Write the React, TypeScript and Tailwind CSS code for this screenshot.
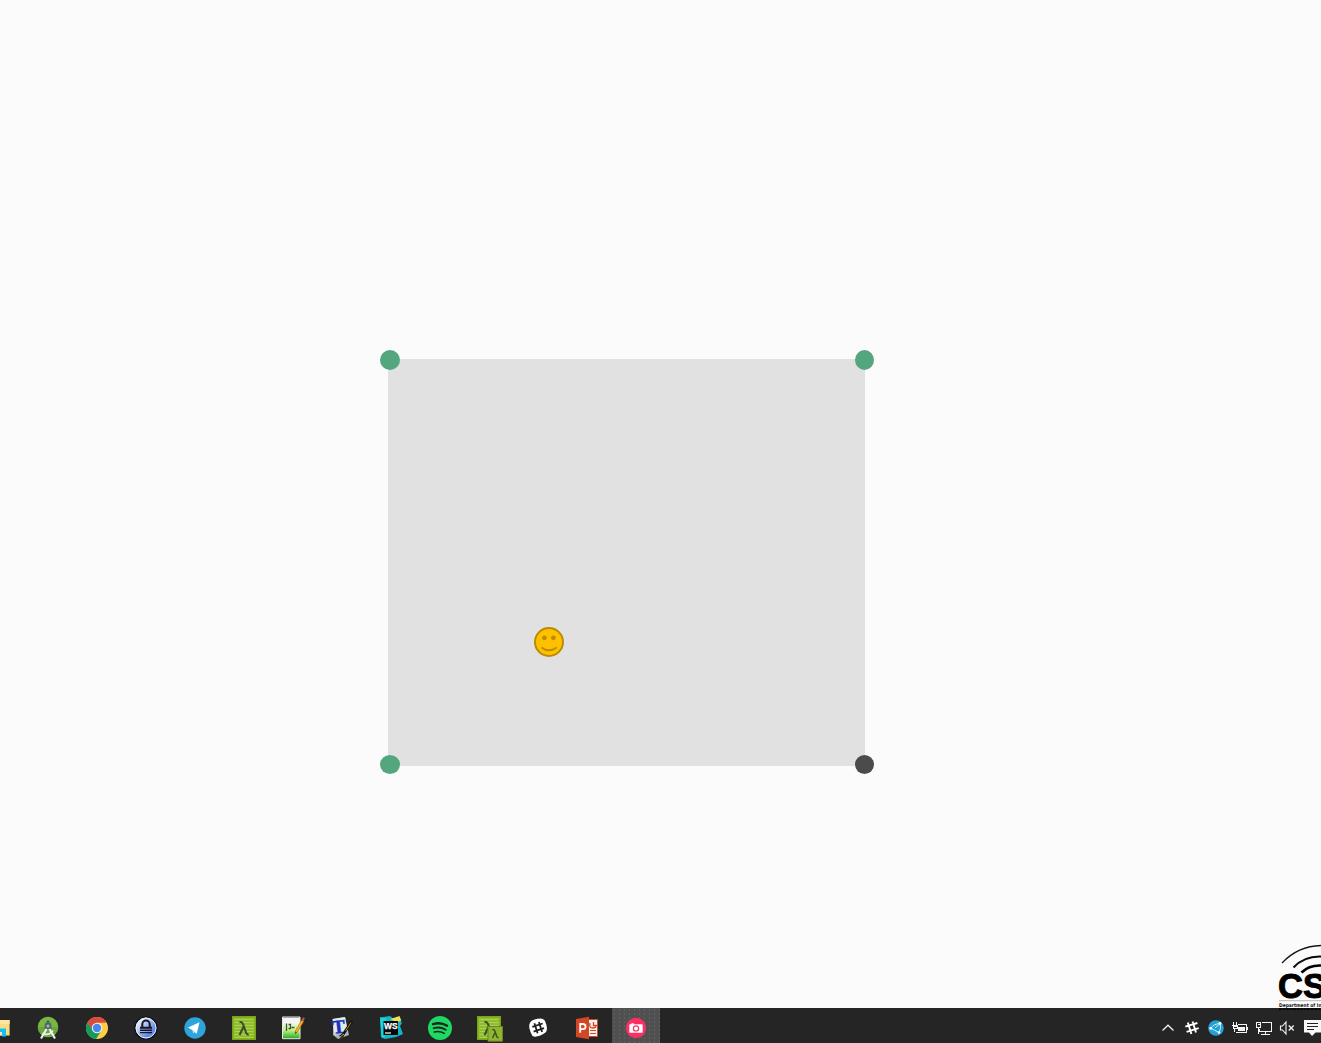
import type { ReactNode } from "react";

function Icon({ children, size = 24 }: { children: ReactNode; size?: number }) {
  return (
    <svg width={size} height={size} viewBox={`0 0 ${size} ${size}`} className="block shrink-0 overflow-visible" fill="none">
      {children}
    </svg>
  );
}

const Explorer = () => (
  <Icon>
    <path d="M1 4h21.6v15.5H1z" fill="#f9dc84" />
    <path d="M2 4h20.6v4H2z" fill="#ffe69b" />
    <path d="M4 12.5h15v8h-4v-4.5H8v4.5H4z" fill="#13c0f5" />
    <path d="M8 16h7v3.5H8z" fill="#f6e8b0" />
  </Icon>
);

const AndroidStudio = () => (
  <Icon>
    <circle cx="12" cy="11" r="10.3" fill="#77b844" />
    <path d="M2 11a10 10 0 0 0 20 0z" fill="#6aa63f" />
    <path d="M12 4.5v3" stroke="#4f5b5e" strokeWidth="2.4" />
    <path d="M8.6 13V9.7a3.4 3.4 0 0 1 6.8 0V13z" fill="#56626a" />
    <circle cx="12" cy="10" r="1.5" fill="#a9b8b4" />
    <path d="M10.6 13 5 22.5M13.4 13 19 22.5" stroke="#f0f2ee" strokeWidth="2.1" />
    <path d="M6.5 17.2q6 3.3 10.5-2.7" stroke="#f0f2ee" strokeWidth="1.6" />
  </Icon>
);

const Chrome = () => (
  <Icon>
    <circle cx="12" cy="12" r="11" fill="#ffcd46" />
    <path d="M12 6.8h9.6A11 11 0 0 0 2.5 6.4L7.5 15z" fill="#db4a3e" />
    <path d="M2.5 6.4A11 11 0 0 0 11 23l5.3-8.3L8 15z" fill="#129b5c" />
    <circle cx="12" cy="12" r="5.2" fill="#f1f5f2" />
    <circle cx="12" cy="12" r="4.2" fill="#4687f4" />
  </Icon>
);

const Lock = () => (
  <Icon>
    <defs>
      <linearGradient id="lock-fill" x1="0" y1="0" x2="1" y2="1">
        <stop offset=".2" stopColor="#e6edff" />
        <stop offset=".7" stopColor="#6489e8" />
      </linearGradient>
    </defs>
    <circle cx="12" cy="12" r="11" fill="url(#lock-fill)" stroke="#0a0d12" strokeWidth="1.2" />
    <circle cx="12" cy="12" r="10" stroke="#e6ebf7" strokeWidth="1" />
    <path d="M8.3 11V8.3a3.7 3.7 0 0 1 7.4 0V11" stroke="#15191f" strokeWidth="2" />
    <path d="M6 10.7h12v2H6zM6 13.5h12v1.6H6zM6 15.9h12v1.4H6z" fill="#15191f" />
  </Icon>
);

const Telegram = () => (
  <Icon>
    <circle cx="12" cy="12" r="10.7" fill="#2da5dc" />
    <path d="m5 11.5 11.5-5.3-2.8 11.5-3.4-3z" fill="#fff" />
    <path d="m9.2 13.4 1.1 4.3 1.9-2.2z" fill="#c8deeb" />
  </Icon>
);

const Lambda = () => (
  <g stroke="#424b28" strokeWidth="2.1">
    <path d="M7.5 6h1.2q1.6 0 2.3 2l3.2 9q.6 1.8 2.5 1.2" />
    <path d="m11.6 10.5-4 8.5" />
  </g>
);

const NotepadLambda = () => (
  <Icon>
    <path d="M.7.7h22.6v22.6H.7z" fill="#8fbd2c" stroke="#78a312" strokeWidth="1.4" />
    <path d="M2.5 3.5h19M2.5 6.5h19M2.5 9.5h19M2.5 12.5h19M2.5 15.5h19M2.5 18.5h19M2.5 21.5h19" stroke="#a9d15a" strokeWidth="1" />
    <Lambda />
  </Icon>
);

const Notepad = () => (
  <Icon>
    <defs>
      <linearGradient id="note-fill" x1="0" y1="0" x2="0" y2="1">
        <stop offset=".25" stopColor="#f5f6f3" />
        <stop offset=".6" stopColor="#c7f189" />
        <stop offset="1" stopColor="#24ab20" />
      </linearGradient>
    </defs>
    <path d="M1.5 1h17.5v21.7H1.5z" fill="url(#note-fill)" stroke="#e4e9e4" />
    <path d="M2.5 1.5h16" stroke="#59605c" strokeDasharray="1 1" />
    <path d="M5.5 7.5v7.5M7.5 8.5h2v4h-2M10.5 11.5h3" stroke="#3c533a" strokeWidth="1.3" />
    <path d="m14 18 .8-4 5.8-9.7 2 1.2-5.8 9.8z" fill="#f5b61d" stroke="#a96a11" strokeWidth=".6" />
    <path d="m20.6 3.8 1.6-2.5 1.7.9-1.4 3z" fill="#d74757" />
    <path d="m14 18 .6-2.5 1.4.9z" fill="#433b28" />
  </Icon>
);

const TextEditor = () => (
  <Icon>
    <path d="m3 3 12-2 4 18-11 4-5-4z" fill="#aeb4b8" />
    <path d="m2.5 3 12.5-2 2.5 14-13 4z" fill="#e5e9ec" />
    <text x="2.5" y="17" transform="rotate(-6 10 12)" fill="#1433bb" stroke="#1433bb" strokeWidth=".5" fontFamily="Liberation Serif, serif" fontWeight="700" fontSize="19">T</text>
    <path d="m10 21 3-2" stroke="#111" strokeWidth="3" />
    <path d="m12 20 10-15" stroke="#111" strokeWidth="2.6" />
    <path d="m15.5 15 5.5-8.5" stroke="#c29336" strokeWidth=".9" />
    <path d="m10 21 4-3" stroke="#d6ab45" strokeWidth="1" />
  </Icon>
);

const WebStorm = () => (
  <Icon>
    <path d="M1 1.5 11 0l4 3 4-2 4 6-2 3 3 8-7 3-11 2-4-2z" fill="#10b7c8" />
    <path d="m11.5 3 9-3 1.8 4.5-5 2z" fill="#f0e54e" />
    <path d="m1 1.5 7 1-3 5 1 13-3 2z" fill="#1dd2dc" />
    <path d="M4.5 5h14.5v14H4.5z" fill="#050808" />
    <text x="5" y="12.8" fill="#fff" stroke="#fff" strokeWidth=".25" fontFamily="Liberation Sans, sans-serif" fontWeight="700" fontSize="8.5" textLength="13.6" lengthAdjust="spacingAndGlyphs">WS</text>
    <path d="M6 17h6" stroke="#fff" strokeWidth="1.2" />
  </Icon>
);

const Spotify = () => (
  <Icon>
    <circle cx="12" cy="12" r="12" fill="#1fd765" />
    <g stroke="#18291e" strokeLinecap="round">
      <path d="M5 8.1q7.7-2.3 14.1 1.6" strokeWidth="2.3" />
      <path d="M5.7 12.2q6.3-2 12 1.5" strokeWidth="1.9" />
      <path d="M6.2 16q5.4-1.5 10.1 1.4" strokeWidth="1.5" />
    </g>
  </Icon>
);

const LambdaPair = () => (
  <Icon>
    <path d="M.7.7h22.6v22.6H.7z" fill="#8fbd2c" stroke="#78a312" strokeWidth="1.4" />
    <path d="M2.5 3.5h19M2.5 6.5h19M2.5 9.5h19M2.5 12.5h19M2.5 15.5h19M2.5 18.5h19M2.5 21.5h19" stroke="#a9d15a" />
    <Lambda />
    <path d="M11 10.5h14.5v14.7H11z" fill="#8db72f" stroke="#688525" />
    <g transform="translate(10.5 9.5) scale(.66)"><Lambda /></g>
  </Icon>
);

const Slack = () => (
  <Icon>
    <path d="M8.5 3.5Q17 .8 19 5q4 9 .2 11.8Q10.6 22.2 6.5 20 1.4 11 4 6.8 5 4.6 8.5 3.5z" fill="#fff" />
    <path d="m8.4 7.3 3.2 10M12.9 5.9l3.2 10M6.3 10.9l10.4-3.4M7.6 15.6 18 12.2" stroke="#202020" strokeWidth="1.8" />
  </Icon>
);

const PowerPoint = () => (
  <Icon>
    <path d="M11 3.5h11.5v17H11z" fill="#f4f1ee" stroke="#d24726" />
    <path d="M18.5 6v3.5H22M15 7q-1 5 2.5 5 3 0 3.5-1.5" stroke="#d24726" strokeWidth="1.3" />
    <path d="M15 14.5h6M15 17.5h6" stroke="#d24726" strokeWidth="1.2" />
    <path d="M1 3 14 .7v22.6L1 21z" fill="#d24726" />
    <path d="M5.2 16.7V8h2.7q2.7 0 2.7 2.6t-2.8 2.6H5.5" stroke="#fff" strokeWidth="1.8" />
  </Icon>
);

const Camera = () => (
  <Icon>
    <circle cx="12" cy="12" r="10.2" fill="#fc2e63" />
    <path d="M6 8.2h1l.6-1h2l.6 1H18a.7.7 0 0 1 .7.7V16a.7.7 0 0 1-.7.7H6a.7.7 0 0 1-.7-.7V8.9a.7.7 0 0 1 .7-.7z" fill="#fff" />
    <circle cx="12" cy="12.4" r="3.2" fill="#fc2e63" />
    <circle cx="12" cy="12.4" r="2" fill="#fff" />
  </Icon>
);

const apps = [Explorer, AndroidStudio, Chrome, Lock, Telegram, NotepadLambda, Notepad, TextEditor, WebStorm, Spotify, LambdaPair, Slack, PowerPoint];

const trayIcons: ReactNode[] = [
  <path d="m6.5 14.5 5.5-5.3 5.5 5.3" stroke="#f4f4f4" strokeWidth="1.2" />,
  <path d="m7.8 6.5 3.6 11.5M12.6 5.5 16 16.5M5.3 10.6 17.4 7M6.6 15.8 18.7 12.2" stroke="#fff" strokeWidth="1.9" />,
  <>
    <circle cx="12" cy="12" r="7.8" fill="#23a1d6" />
    <path d="M6.8 12.3q3-4.5 9.2-4.8M6.8 12.3l8.2 4.2q2.6-4 1-9M11 12l5-4.5" stroke="#c8effb" strokeWidth="1" />
    <circle cx="16" cy="7.5" r="1.4" fill="#fff" />
    <circle cx="15" cy="16.5" r="1.3" fill="#fff" />
    <circle cx="6.8" cy="12.3" r="1.4" fill="#fff" />
  </>,
  <g stroke="#f4f4f4" shapeRendering="crispEdges">
    <path d="M10 8.5h8.5v8H8M19.5 11v3" />
    <path d="M10 11h7v4h-7z" fill="#f4f4f4" stroke="none" />
    <path d="M5.5 6v3M8.5 6v3M4 9.5h6M5 10h4v2H5zM6.5 12v4" />
  </g>,
  <g stroke="#f4f4f4" shapeRendering="crispEdges">
    <path d="M10 6.5h9.5v9H7v-3M13.5 16v2M9 18.5h9" />
    <path d="M4.5 6.5h4v5h-4zM6.5 12v6" />
    <path d="M6 8h2v2" />
  </g>,
  <>
    <path d="M4.5 10h2L10 6v12l-3.5-4h-2z" stroke="#f4f4f4" strokeWidth="1.1" />
    <path d="m12.7 9.5 5 5m0-5-5 5" stroke="#f4f4f4" strokeWidth="1.3" />
  </>,
  <>
    <path d="M4 4h17v12.5h-5.5L12 20l-3-3.5H4z" fill="#f8f8f8" />
    <path d="M7 7.5h11M7 10.5h11M7 13.5h7" stroke="#202020" shapeRendering="crispEdges" />
  </>,
];

function Handle({ tone = "green", width = 20, height = 20 }: { tone?: "green" | "dark"; width?: number; height?: number }) {
  return (
    <svg width={width} height={height} viewBox="0 0 20 20" preserveAspectRatio="none">
      <circle cx="10" cy="10" r="10" fill={tone === "dark" ? "#4b4b4b" : "#54a67f"} />
    </svg>
  );
}

export default function App() {
  return (
    <main className="flex h-[1043px] w-[1321px] flex-col overflow-hidden bg-[#fbfbfb] font-['Liberation_Sans',sans-serif]">
      <section className="relative h-[1008px] shrink-0">
        <div className="absolute left-[388px] top-[359px] h-[407px] w-[477px] bg-[#e1e1e1]">
          <div className="absolute -left-2 -top-[9px]"><Handle /></div>
          <div className="absolute -right-[9px] -top-[9px]"><Handle width={19} /></div>
          <div className="absolute -bottom-2 -left-2"><Handle height={19} /></div>
          <div className="absolute -bottom-2 -right-[9px]"><Handle tone="dark" width={19} height={19} /></div>
          <svg className="absolute left-[146px] top-[268px]" width="30" height="30" viewBox="0 0 30 30" fill="none">
            <circle cx="15" cy="15" r="14" fill="#ffc000" stroke="#bc8c00" strokeWidth="2" />
            <circle cx="10.4" cy="10.8" r="2.4" fill="#bc8c00" />
            <circle cx="19.4" cy="10.8" r="2.4" fill="#bc8c00" />
            <path d="M7.3 20.5q7.7 5.6 15.4 0" stroke="#bc8c00" strokeWidth="2" />
          </svg>
        </div>
        <svg className="absolute left-[1278px] top-[943px] z-10" width="43" height="69" viewBox="0 0 43 69" fill="none">
          <path d="M4 20Q20 3 43 2.5" stroke="#161616" strokeWidth="1.3" />
          <path d="M15.5 24.5Q26 13 43 13.5" stroke="#0b0b0b" strokeWidth="2" />
          <path d="M23.5 29.5Q31 22 43 22.5" stroke="#000" strokeWidth="2.6" />
          <text x="0" y="55" fill="#000" stroke="#000" strokeWidth="1" fontSize="34.5" fontWeight="700">CS</text>
          <path d="M1 57.7h42" stroke="#999" strokeWidth=".7" />
          <text x="1" y="63.5" fill="#111" fontFamily="DejaVu Sans, sans-serif" fontSize="5" fontWeight="700" textLength="66" lengthAdjust="spacingAndGlyphs">Department of Informatics</text>
          <path d="M1 66h42" stroke="#090909" strokeWidth="1.8" strokeDasharray="3 .5" />
        </svg>
      </section>
      <footer className="flex h-[35px] shrink-0 justify-between bg-[#252525]">
        <nav className="-ml-[25px] flex">
          {apps.map((AppIcon, i) => (
            <div key={i} className="mr-px flex w-12 justify-center pt-2"><AppIcon /></div>
          ))}
          <div className="flex w-12 justify-center bg-[#505050] bg-[radial-gradient(#5d6060_0.7px,transparent_0.8px)] bg-[size:5px_4px] pt-2"><Camera /></div>
        </nav>
        <div className="-mr-[3px] flex pt-2">
          {trayIcons.map((icon, i) => <Icon key={i}>{icon}</Icon>)}
        </div>
      </footer>
    </main>
  );
}
